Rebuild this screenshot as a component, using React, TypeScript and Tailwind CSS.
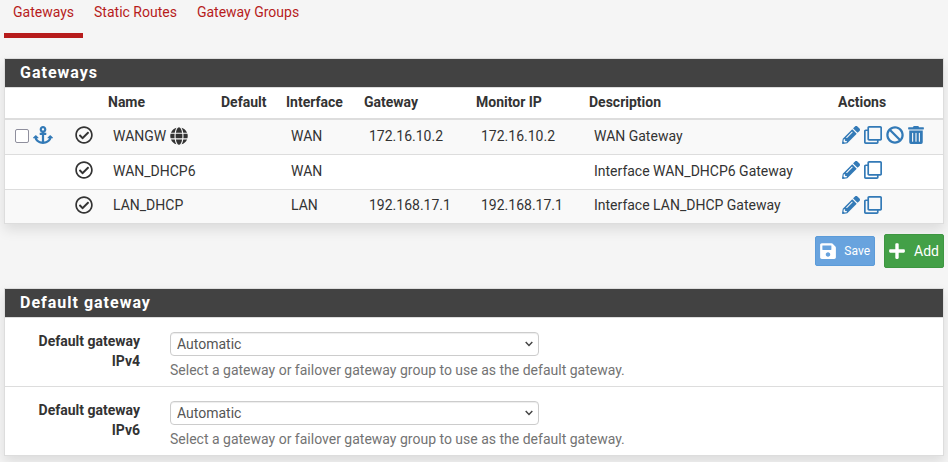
import { useState, type ReactNode } from "react";
import {
  FaAnchor,
  FaBan,
  FaGlobe,
  FaPencilAlt,
  FaPlus,
  FaRegCheckCircle,
  FaRegClone,
  FaSave,
  FaTrashAlt,
} from "react-icons/fa";

type Gateway = {
  name: string;
  isDefault: boolean;
  iface: string;
  gateway: string;
  monitor: string;
  description: string;
};

const gateways: Gateway[] = [
  { name: "WANGW", isDefault: true, iface: "WAN", gateway: "172.16.10.2", monitor: "172.16.10.2", description: "WAN Gateway" },
  { name: "WAN_DHCP6", isDefault: false, iface: "WAN", gateway: "", monitor: "", description: "Interface WAN_DHCP6 Gateway" },
  { name: "LAN_DHCP", isDefault: false, iface: "LAN", gateway: "192.168.17.1", monitor: "192.168.17.1", description: "Interface LAN_DHCP Gateway" },
];

const tabs = ["Gateways", "Static Routes", "Gateway Groups"];

function Panel({ title, children }: { title: string; children: ReactNode }) {
  return (
    <section className="border border-[#dddddd] bg-white shadow-[0_6px_12px_rgba(0,0,0,0.1)]">
      <h2 className="h-7 bg-[#424242] px-[15px] text-base leading-7 font-bold tracking-[1px] text-white">{title}</h2>
      <div className="border-t border-[#dddddd]">{children}</div>
    </section>
  );
}

function IconLink({ label, children }: { label: string; children: ReactNode }) {
  return (
    <a href="#" aria-label={label} title={label} className="text-[#337ab7]">
      {children}
    </a>
  );
}

function GatewayRow({ row }: { row: Gateway }) {
  const [selected, setSelected] = useState(false);
  return (
    <tr className="h-[35px] border-b border-[#dddddd] last:h-[34px] last:border-b-0 odd:bg-[#f9f9f9]">
      <td className="pb-[3px] pl-2.5">
        {row.isDefault && (
          <div className="flex items-center gap-1">
            <input
              type="checkbox"
              aria-label={"Select " + row.name}
              checked={selected}
              onChange={(e) => setSelected(e.target.checked)}
              className="mt-0.5 size-3.5 shrink-0 appearance-none rounded-xs border border-[#8f8f9d] bg-white checked:bg-[#337ab7]"
            />
            <IconLink label="Move">
              <FaAnchor className="h-[18px] w-5" />
            </IconLink>
          </div>
        )}
      </td>
      <td className="pb-[3px] pl-2.5">
        <FaRegCheckCircle className="size-[18px]" title="Gateway enabled" />
      </td>
      <td className="pb-0.5 pl-2.5">
        <div className="flex items-center gap-1">
          {row.name}
          {row.isDefault && <FaGlobe className="size-[18px]" />}
        </div>
      </td>
      <td />
      <td className="pb-0.5 pl-2.5">{row.iface}</td>
      <td className="pb-0.5 pl-2.5">{row.gateway}</td>
      <td className="pb-0.5 pl-2.5">{row.monitor}</td>
      <td className="pb-0.5 pl-2.5">{row.description}</td>
      <td className="pb-[3px] pl-[9px]">
        <div className="flex items-center gap-1">
          <IconLink label="Edit gateway">
            <FaPencilAlt className="size-[18px]" />
          </IconLink>
          <IconLink label="Copy gateway">
            <FaRegClone className="size-[18px]" />
          </IconLink>
          {row.isDefault && (
            <>
              <IconLink label="Disable gateway">
                <FaBan className="size-[18px]" />
              </IconLink>
              <IconLink label="Delete gateway">
                <FaTrashAlt className="h-[18px] w-4" />
              </IconLink>
            </>
          )}
        </div>
      </td>
    </tr>
  );
}

function DefaultGatewayField({ version }: { version: string }) {
  const id = "default-gateway-" + version;
  return (
    <div className="flex gap-[30px] border-b border-[#dddddd] pt-[13px] pb-1.5 last:border-b-0">
      <label htmlFor={id} className="w-[135px] shrink-0 pl-5 text-right leading-5 font-bold">
        Default gateway {version}
      </label>
      <div className="min-w-0 flex-1 pt-px pr-4">
        <div className="relative max-w-[369px]">
          <select
            id={id}
            className="block h-6 w-full appearance-none rounded-sm border border-[#cccccc] bg-white px-1.5 leading-5 text-[#555555] shadow-[inset_0_1px_1px_rgba(0,0,0,0.075)]"
          >
            <option>Automatic</option>
          </select>
          <svg
            viewBox="0 0 8 6"
            className="pointer-events-none absolute top-[9px] right-1.5 h-1.5 w-2 fill-none stroke-[#444444] stroke-[1.5]"
          >
            <path d="M0.7 1 L4 4.4 L7.3 1" />
          </svg>
        </div>
        <p className="pt-1 leading-5 text-[#737373]">
          Select a gateway or failover gateway group to use as the default gateway.
        </p>
      </div>
    </div>
  );
}

export default function App() {
  return (
    <main className="min-h-screen bg-[#f5f5f5] px-1 pb-1.5 font-[Roboto,sans-serif] text-sm text-[#333333]">
      <nav className="flex gap-0.5 text-[#b71c1c]">
        {tabs.map((tab, i) => (
          <a
            key={tab}
            href="#"
            className={
              "h-[38px] border-b-[5px] px-[9px] pt-0.5 leading-5 " + (i === 0 ? "border-[#b71c1c]" : "border-transparent")
            }
          >
            {tab}
          </a>
        ))}
      </nav>

      <div className="pt-5">
        <Panel title="Gateways">
          <table className="w-full table-fixed border-collapse text-left">
            <thead>
              <tr className="h-[31px] border-b-2 border-[#dddddd]">
                <th className="w-[60px]" />
                <th className="w-[38px]" />
                <th className="w-[113px] pb-0.5 pl-[5px]">Name</th>
                <th className="w-[65px] pb-0.5 pl-[5px]">Default</th>
                <th className="w-[78px] pb-0.5 pl-[5px]">Interface</th>
                <th className="w-[112px] pb-0.5 pl-[5px]">Gateway</th>
                <th className="w-[113px] pb-0.5 pl-[5px]">Monitor IP</th>
                <th className="pb-0.5 pl-[5px]">Description</th>
                <th className="w-[110px] pb-0.5 pl-[5px]">Actions</th>
              </tr>
            </thead>
            <tbody>
              {gateways.map((row) => (
                <GatewayRow key={row.name} row={row} />
              ))}
            </tbody>
          </table>
        </Panel>
      </div>

      <div className="flex items-center justify-end gap-[9px] py-2.5 text-white">
        <button
          type="button"
          className="flex h-[30px] w-[60px] items-center justify-between rounded-xs border border-[#5b9bd9] bg-[#68a3de] pr-1 pl-[3px] text-xs"
        >
          <FaSave className="size-[18px]" />
          Save
        </button>
        <button
          type="button"
          className="flex h-[34px] w-[60px] items-center justify-between rounded-xs border border-[#3d9641] bg-[#43a047] pr-1 pl-[3px] text-sm"
        >
          <FaPlus className="size-[18px]" />
          Add
        </button>
      </div>

      <div className="pt-2.5">
        <Panel title="Default gateway">
          <DefaultGatewayField version="IPv4" />
          <DefaultGatewayField version="IPv6" />
        </Panel>
      </div>
    </main>
  );
}
